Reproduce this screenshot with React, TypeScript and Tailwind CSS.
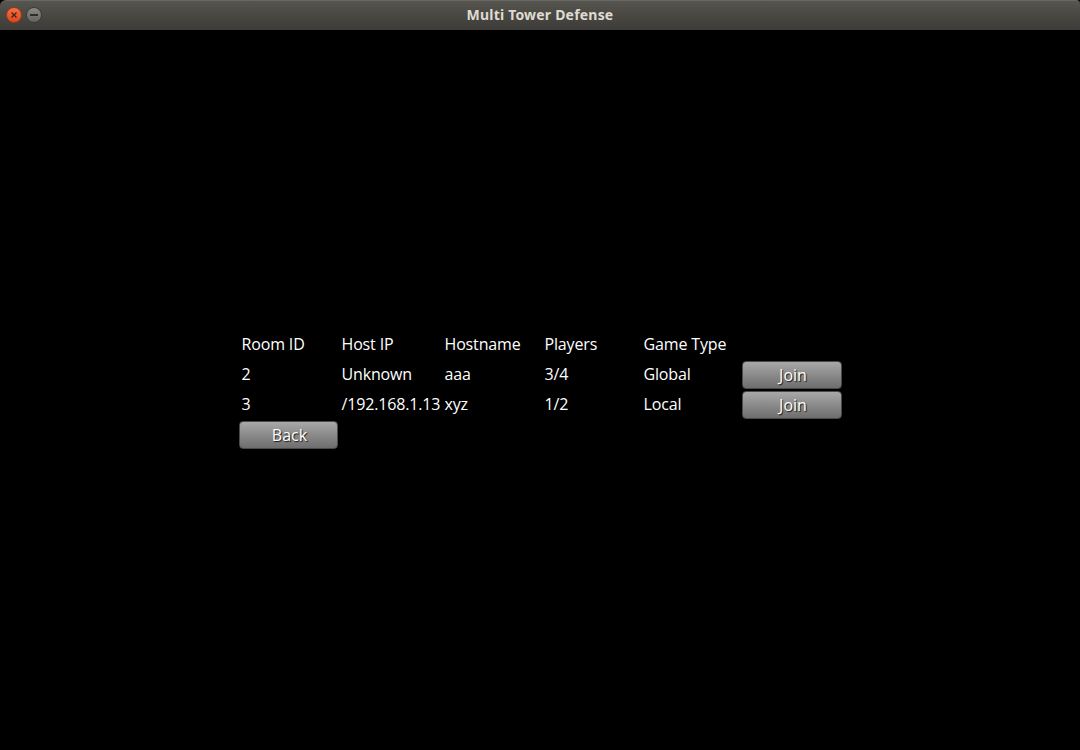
import React from "react";

const font = { fontFamily: '"Open Sans", "Noto Sans", sans-serif' };

function Btn({ label }: { label: string }) {
  return (
    <div className="flex h-[28px] items-center justify-center rounded-[4px] border border-[#4a4a4a] bg-gradient-to-b from-[#a8a8a8] to-[#6e6e6e] pb-px pl-[3px] text-[16px] text-white [text-shadow:1px_1px_1px_#1a1a1a]">
      {label}
    </div>
  );
}

function Cell({ children }: { children?: React.ReactNode }) {
  return (
    <div className="flex h-[30px] items-center whitespace-nowrap pb-[2px] pl-[3px] text-[16px] tracking-[-0.15px] text-white">
      {children}
    </div>
  );
}

export default function App() {
  const rows = [
    ["2", "Unknown", "aaa", "3/4", "Global"],
    ["3", "/192.168.1.13", "xyz", "1/2", "Local"],
  ];
  return (
    <div className="flex h-[750px] w-[1080px] flex-col bg-black" style={font}>
      <div className="relative flex h-[30px] shrink-0 items-center justify-center rounded-tl-[6px] rounded-tr-[4px] border-t border-[#6a6862] bg-gradient-to-b from-[#57554f] to-[#3c3b37] pb-[2px]">
        <div className="absolute left-[6px] top-[6px] flex gap-[4px]">
          <div className="flex h-[16px] w-[16px] items-center justify-center rounded-full border border-[#9a3a1a] bg-gradient-to-b from-[#f7703e] to-[#e0461a]">
            <svg width="8" height="8" viewBox="0 0 8 8">
              <path d="M1.5 1.5 L6.5 6.5 M6.5 1.5 L1.5 6.5" stroke="#3a2a20" strokeWidth="1.4" />
            </svg>
          </div>
          <div className="flex h-[16px] w-[16px] items-center justify-center rounded-full border border-[#3a3a38] bg-gradient-to-b from-[#8a8986] to-[#65645f]">
            <div className="h-[1.5px] w-[8px] bg-[#2e2e2c]" />
          </div>
        </div>
        <span className="text-[14px] font-bold tracking-[0.2px] text-[#dfdbd2]" style={{ fontFamily: '"Noto Sans", "DejaVu Sans", sans-serif' }}>
          Multi Tower Defense
        </span>
      </div>
      <div className="flex flex-1 items-center justify-center">
        <div className="grid grid-cols-[100px_103px_100px_99px_100px_101px]">
          <Cell>Room ID</Cell>
          <Cell>Host IP</Cell>
          <Cell>Hostname</Cell>
          <Cell>Players</Cell>
          <Cell>Game Type</Cell>
          <Cell />
          {rows.map((r, i) => (
            <React.Fragment key={i}>
              {r.map((c, j) => (
                <Cell key={j}>{c}</Cell>
              ))}
              <div className="h-[30px] py-px pl-px">
                <Btn label="Join" />
              </div>
            </React.Fragment>
          ))}
          <div className="h-[30px] py-px pr-px">
            <Btn label="Back" />
          </div>
        </div>
      </div>
    </div>
  );
}
